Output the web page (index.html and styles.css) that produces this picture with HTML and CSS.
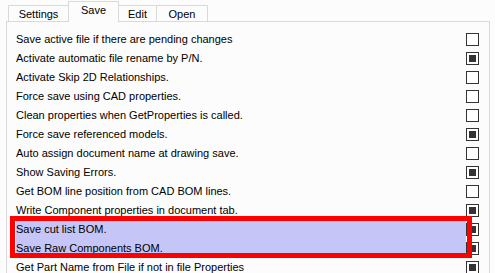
FILE: index.html
```html
<!DOCTYPE html>
<html lang='en'>
  <head>
    <meta charset='utf-8'>
    <title>Options - Save</title>
    <link rel="stylesheet" href="styles.css">
  </head>

  <body>
    <div class="tabs">
      <div class="tab t-settings">Settings</div>
      <div class="tab t-save active">Save</div>
      <div class="tab t-edit">Edit</div>
      <div class="tab t-open">Open</div>
    </div>

    <div class="panel">
      <div class="row"><span>Save active file if there are pending changes</span><i class="box"></i></div>
      <div class="row"><span>Activate automatic file rename by P/N.</span><i class="box on"></i></div>
      <div class="row"><span>Activate Skip 2D Relationships.</span><i class="box"></i></div>
      <div class="row"><span>Force save using CAD properties.</span><i class="box"></i></div>
      <div class="row"><span>Clean properties when GetProperties is called.</span><i class="box"></i></div>
      <div class="row"><span>Force save referenced models.</span><i class="box on"></i></div>
      <div class="row"><span>Auto assign document name at drawing save.</span><i class="box"></i></div>
      <div class="row"><span>Show Saving Errors.</span><i class="box on"></i></div>
      <div class="row"><span>Get BOM line position from CAD BOM lines.</span><i class="box"></i></div>
      <div class="row"><span>Write Component properties in document tab.</span><i class="box on"></i></div>
      <div class="marked">
        <div class="row sel"><span>Save cut list BOM.</span><i class="box on"></i></div>
        <div class="row sel"><span>Save Raw Components BOM.</span><i class="box on"></i></div>
      </div>
      <div class="row"><span>Get Part Name from File if not in file Properties</span><i class="box on"></i></div>
    </div>
  </body>
</html>
```

FILE: styles.css
```css
/* general */
* { box-sizing: border-box; }
body { margin: 0; background: #fcfcfc; color: #000; font: 11px "Liberation Sans", Arial, sans-serif; overflow: hidden; }
/* tab strip */
.tabs { display: flex; align-items: flex-end; padding: 1px 0 0 8px; margin-bottom: -1px; }
.tab { height: 17px; line-height: 16px; text-align: center; border: 1px solid #d9d9d9; border-bottom: 0; margin-left: -1px; }
.tab.active { position: relative; z-index: 1; height: 21px; line-height: 17px; background: #fcfcfc; }
.t-settings { width: 61px; margin-left: 0; }
.t-save { width: 51px; }
.t-edit { width: 39px; }
.t-open { width: 52px; }
/* option list */
.panel { margin: 0 5px 0 6px; border: 1px solid #d9d9d9; border-bottom: 0; padding: 8px 10px 0 9px; }
.row { display: flex; align-items: center; justify-content: space-between; height: 19px; }
.row span { flex: 1; line-height: 19px; }
.row.sel span { background: #c5c5f7; }
.box { width: 13px; height: 13px; border: 1px solid #333; background: #fff; padding: 2px; }
.box.on::before { content: ""; display: block; width: 7px; height: 7px; background: #333; }
/* red callout around the two rows */
.marked { position: relative; }
.marked::after { content: ""; position: absolute; top: -4px; left: -6px; right: 7px; bottom: 0; border: 5px solid #f00; }
```
